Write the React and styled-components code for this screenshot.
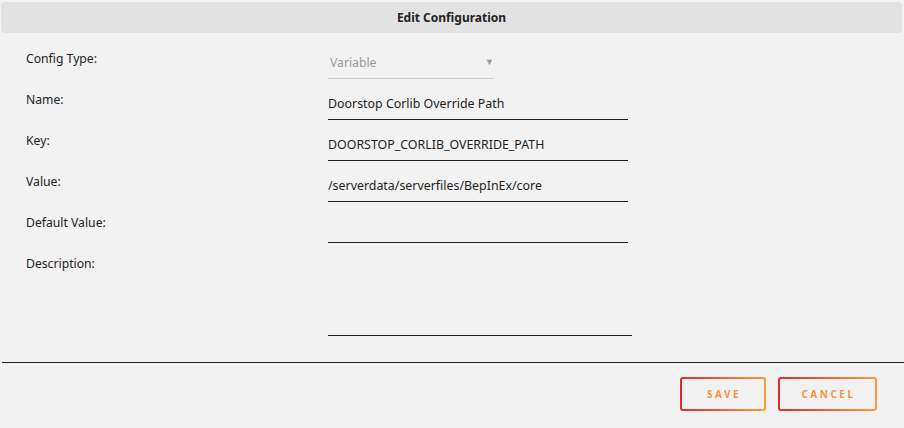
import styled, { createGlobalStyle } from "styled-components";

const GlobalStyle = createGlobalStyle`
  html, body {
    margin: 0;
    padding: 0;
    background: #f2f2f2;
  }
  body {
    font-family: "Noto Sans", "Open Sans", Arial, sans-serif;
    color: #222;
  }
`;

const Dialog = styled.div`
  width: 904px;
  height: 428px;
  box-sizing: border-box;
  padding-top: 2px;
  display: flex;
  flex-direction: column;
`;

const Header = styled.div`
  margin: 0 2px 0 1px;
  height: 31px;
  background: #e2e2e2;
  border-radius: 4px;
  display: flex;
  align-items: center;
  justify-content: center;
  font-size: 12px;
  font-weight: 700;
  color: #222;
`;

const Form = styled.div`
  padding: 5px 0 0 26px;
  display: flex;
  flex-direction: column;
`;

const Row = styled.div`
  display: grid;
  grid-template-columns: 302px 1fr;
  height: ${(p) => p.$height || 41}px;
`;

const Label = styled.div`
  padding-top: 13px;
  font-size: 12.2px;
  line-height: 16px;
  color: #222;
`;

const Select = styled.div`
  align-self: end;
  width: 166px;
  height: 28px;
  box-sizing: border-box;
  border-bottom: 1px solid #cfcfcf;
  display: flex;
  align-items: center;
  justify-content: space-between;
  padding: 0 0 4px 2px;
  font-size: 12.2px;
  color: #9a9a9a;
`;

const Arrow = styled.span`
  font-size: 9px;
  color: #999;
  margin-right: 0;
  margin-top: -3px;
`;

const Input = styled.input`
  align-self: end;
  width: ${(p) => p.$width || 300}px;
  height: 30px;
  box-sizing: border-box;
  border: none;
  border-bottom: 1px solid #1e1e1e;
  background: transparent;
  padding: 0 0 3px 0;
  font-family: inherit;
  font-size: 12.4px;
  color: #1e1e1e;
  outline: none;
`;

const TextArea = styled.textarea`
  align-self: end;
  width: 304px;
  height: 80px;
  box-sizing: border-box;
  border: none;
  border-bottom: 1px solid #1e1e1e;
  background: transparent;
  resize: none;
  font-family: inherit;
  font-size: 12.4px;
  padding: 0;
  outline: none;
`;

const Divider = styled.hr`
  margin: 26px 0 0 2px;
  border: none;
  border-top: 1px solid #1e1e1e;
`;

const Footer = styled.div`
  display: flex;
  justify-content: flex-end;
  gap: 12px;
  padding: 14px 27px 0 0;
`;

const Button = styled.button`
  width: ${(p) => p.$width}px;
  height: 34px;
  border: 2px solid transparent;
  border-radius: 3px;
  background: linear-gradient(#f2f2f2, #f2f2f2) padding-box,
    linear-gradient(90deg, #e42a2a, #ff9a3a) border-box;
  font-family: inherit;
  font-size: 10px;
  font-weight: 700;
  letter-spacing: 2.5px;
  color: #f8923c;
  cursor: pointer;
  padding: 0 0 0 2px;
`;

const fields = [
  { label: "Name:", value: "Doorstop Corlib Override Path" },
  { label: "Key:", value: "DOORSTOP_CORLIB_OVERRIDE_PATH" },
  { label: "Value:", value: "/serverdata/serverfiles/BepInEx/core" },
  { label: "Default Value:", value: "" },
];

export default function App() {
  return (
    <>
      <GlobalStyle />
      <Dialog>
        <Header>Edit Configuration</Header>
        <Form>
          <Row>
            <Label>Config Type:</Label>
            <Select>
              Variable
              <Arrow>▼</Arrow>
            </Select>
          </Row>
          {fields.map((f) => (
            <Row key={f.label}>
              <Label>{f.label}</Label>
              <Input defaultValue={f.value} readOnly />
            </Row>
          ))}
          <Row $height={93}>
            <Label>Description:</Label>
            <TextArea readOnly />
          </Row>
        </Form>
        <Divider />
        <Footer>
          <Button $width={86}>SAVE</Button>
          <Button $width={99}>CANCEL</Button>
        </Footer>
      </Dialog>
    </>
  );
}
